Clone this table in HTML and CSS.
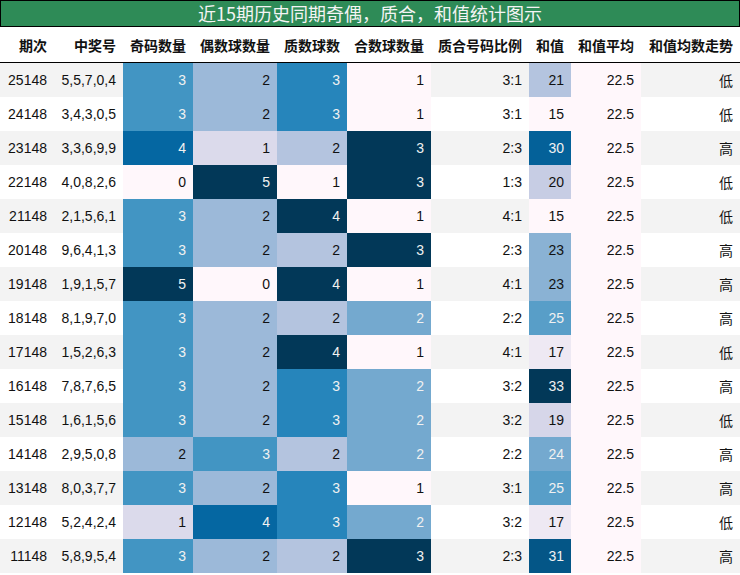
FILE: index.html
```html
<!DOCTYPE html>
<html lang="zh">
<head>
<meta charset="utf-8">
<title>近15期历史同期奇偶，质合，和值统计图示</title>
<link rel="stylesheet" href="styles.css">
</head>
<body>
<div class="title">近15期历史同期奇偶，质合，和值统计图示</div>
<table class="grid">
<colgroup>
<col class="w1"><col class="w2"><col class="w3"><col class="w4"><col class="w5"><col class="w6"><col class="w7"><col class="w8"><col class="w9"><col class="w10">
</colgroup>
<thead>
<tr><th>期次</th><th>中奖号</th><th>奇码数量</th><th>偶数球数量</th><th>质数球数</th><th>合数球数量</th><th>质合号码比例</th><th>和值</th><th>和值平均</th><th>和值均数走势</th></tr>
</thead>
<tbody>
<tr><td>25148</td><td>5,5,7,0,4</td><td class="p60">3</td><td class="p40">2</td><td class="p67">3</td><td class="p0">1</td><td>3:1</td><td class="p33">21</td><td class="p0">22.5</td><td class="cn">低</td></tr>
<tr><td>24148</td><td>3,4,3,0,5</td><td class="p60">3</td><td class="p40">2</td><td class="p67">3</td><td class="p0">1</td><td>3:1</td><td class="p0">15</td><td class="p0">22.5</td><td class="cn">低</td></tr>
<tr><td>23148</td><td>3,3,6,9,9</td><td class="p80">4</td><td class="p20">1</td><td class="p33">2</td><td class="p100">3</td><td>2:3</td><td class="s83">30</td><td class="p0">22.5</td><td class="cn">高</td></tr>
<tr><td>22148</td><td>4,0,8,2,6</td><td class="p0">0</td><td class="p100">5</td><td class="p0">1</td><td class="p100">3</td><td>1:3</td><td class="s28">20</td><td class="p0">22.5</td><td class="cn">低</td></tr>
<tr><td>21148</td><td>2,1,5,6,1</td><td class="p60">3</td><td class="p40">2</td><td class="p100">4</td><td class="p0">1</td><td>4:1</td><td class="p0">15</td><td class="p0">22.5</td><td class="cn">低</td></tr>
<tr><td>20148</td><td>9,6,4,1,3</td><td class="p60">3</td><td class="p40">2</td><td class="p33">2</td><td class="p100">3</td><td>2:3</td><td class="s44">23</td><td class="p0">22.5</td><td class="cn">高</td></tr>
<tr><td>19148</td><td>1,9,1,5,7</td><td class="p100">5</td><td class="p0">0</td><td class="p100">4</td><td class="p0">1</td><td>4:1</td><td class="s44">23</td><td class="p0">22.5</td><td class="cn">高</td></tr>
<tr><td>18148</td><td>8,1,9,7,0</td><td class="p60">3</td><td class="p40">2</td><td class="p33">2</td><td class="p50">2</td><td>2:2</td><td class="s56">25</td><td class="p0">22.5</td><td class="cn">高</td></tr>
<tr><td>17148</td><td>1,5,2,6,3</td><td class="p60">3</td><td class="p40">2</td><td class="p100">4</td><td class="p0">1</td><td>4:1</td><td class="s11">17</td><td class="p0">22.5</td><td class="cn">低</td></tr>
<tr><td>16148</td><td>7,8,7,6,5</td><td class="p60">3</td><td class="p40">2</td><td class="p67">3</td><td class="p50">2</td><td>3:2</td><td class="p100">33</td><td class="p0">22.5</td><td class="cn">高</td></tr>
<tr><td>15148</td><td>1,6,1,5,6</td><td class="p60">3</td><td class="p40">2</td><td class="p67">3</td><td class="p50">2</td><td>3:2</td><td class="s22">19</td><td class="p0">22.5</td><td class="cn">低</td></tr>
<tr><td>14148</td><td>2,9,5,0,8</td><td class="p40">2</td><td class="p60">3</td><td class="p33">2</td><td class="p50">2</td><td>2:2</td><td class="p50">24</td><td class="p0">22.5</td><td class="cn">高</td></tr>
<tr><td>13148</td><td>8,0,3,7,7</td><td class="p60">3</td><td class="p40">2</td><td class="p67">3</td><td class="p0">1</td><td>3:1</td><td class="s56">25</td><td class="p0">22.5</td><td class="cn">高</td></tr>
<tr><td>12148</td><td>5,2,4,2,4</td><td class="p20">1</td><td class="p80">4</td><td class="p67">3</td><td class="p50">2</td><td>3:2</td><td class="s11">17</td><td class="p0">22.5</td><td class="cn">低</td></tr>
<tr><td>11148</td><td>5,8,9,5,4</td><td class="p60">3</td><td class="p40">2</td><td class="p33">2</td><td class="p100">3</td><td>2:3</td><td class="s89">31</td><td class="p0">22.5</td><td class="cn">高</td></tr>
</tbody>
</table>
</body>
</html>
```
FILE: styles.css
```css
html, body {
  margin: 0;
  padding: 0;
  background: #ffffff;
}
body {
  width: 740px;
  font-family: "Liberation Sans", "Noto Sans CJK SC", sans-serif;
  color: #111111;
}
.title {
  box-sizing: border-box;
  height: 27px;
  border: 1px solid #000000;
  background: #2e8b57;
  color: #f4f4f4;
  font-family: "Noto Sans CJK SC", sans-serif;
  font-size: 18px;
  line-height: 25px;
  text-align: center;
}
.grid {
  width: 740px;
  table-layout: fixed;
  border-collapse: collapse;
  border-spacing: 0;
}
.w1 { width: 54px; }
.w2 { width: 69px; }
.w3 { width: 70px; }
.w4 { width: 84px; }
.w5 { width: 70px; }
.w6 { width: 84px; }
.w7 { width: 98px; }
.w8 { width: 42px; }
.w9 { width: 70px; }
.w10 { width: 99px; }
.grid th {
  height: 35px;
  padding: 0 7px;
  border-bottom: 1px solid #000000;
  font-family: "Noto Sans CJK SC", sans-serif;
  font-weight: bold;
  font-size: 14px;
  color: #111111;
  text-align: right;
  white-space: nowrap;
  vertical-align: middle;
  background: #ffffff;
}
.grid td {
  height: 34px;
  padding: 0 7px;
  font-size: 14px;
  text-align: right;
  white-space: nowrap;
  vertical-align: middle;
}
.grid tbody tr:nth-child(odd) { background: #f3f3f3; }
.grid tbody tr:nth-child(even) { background: #ffffff; }
.cn { font-family: "Noto Sans CJK SC", sans-serif; }

.p0 { background: #fff7fb; }
.p20 { background: #dbdaeb; }
.p33 { background: #b4c4df; }
.p40 { background: #9cb9d9; }
.p50 { background: #74a9cf; color: #f1f1f1; }
.p60 { background: #4295c3; color: #f1f1f1; }
.p67 { background: #2685bb; color: #f1f1f1; }
.p80 { background: #0567a2; color: #f1f1f1; }
.p100 { background: #023858; color: #f1f1f1; }
.s11 { background: #eee9f3; }
.s22 { background: #d6d6e9; }
.s28 { background: #c7cde4; }
.s44 { background: #8ab2d4; }
.s56 { background: #589ec8; color: #f1f1f1; }
.s83 { background: #046199; color: #f1f1f1; }
.s89 { background: #045687; color: #f1f1f1; }
```
